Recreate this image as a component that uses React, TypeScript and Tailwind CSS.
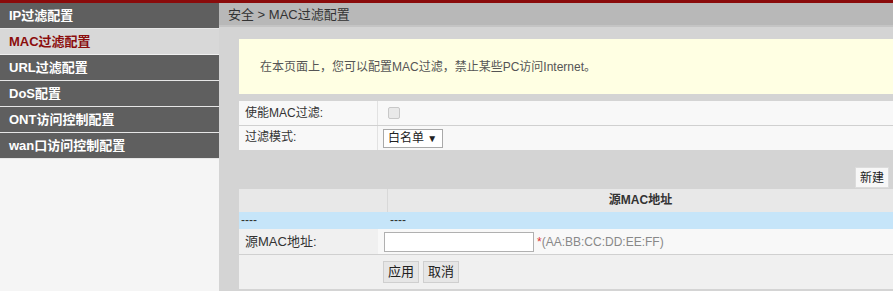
const menu = ["IP过滤配置", "MAC过滤配置", "URL过滤配置", "DoS配置", "ONT访问控制配置", "wan口访问控制配置"];

const font = { fontFamily: '"Liberation Sans", Arial, "Noto Sans CJK SC", sans-serif' };

export default function App() {
  return (
    <div className="w-[893px] h-[291px] overflow-hidden bg-[#d4d4d4] text-[12px] text-[#333]" style={font}>
      {/* top red strip */}
      <div className="h-[3px] bg-[#8a0b0b]" />
      <div className="flex h-[288px]">
        {/* sidebar */}
        <div className="w-[219px] shrink-0 bg-[#f5f5f5]">
          {menu.map((m, i) => (
            <div
              key={m}
              className={
                i === 1
                  ? "h-[26px] border-b border-[#f0f0f0] bg-[#d8d8d8] pl-[9px] leading-[25px] text-[13px] font-bold text-[#8b0d0d]"
                  : "h-[26px] border-b border-[#e6e6e6] bg-[#5f5f5f] pl-[9px] leading-[25px] text-[13px] font-bold text-white"
              }
            >
              {m}
            </div>
          ))}
        </div>

        {/* main */}
        <div className="flex-1 min-w-0">
          <div className="h-[24px] bg-[#b8b8b8] pl-[9px] leading-[24px] text-[13px] text-[#333] border-b-[2px] border-[#c4c4c4]">
            安全 &gt; MAC过滤配置
          </div>
          <div className="pl-[20px] pt-[12px]">
            <div className="h-[55px] bg-[#ffffe3] pl-[21px] flex items-center text-[#555]">
              在本页面上，您可以配置MAC过滤，禁止某些PC访问Internet。
            </div>

            <div className="mt-[7px] bg-[#f8f8f8]">
              <div className="flex h-[25px] border-b border-[#d0d0d0]">
                <div className="w-[139px] border-r border-[#e2e2e2] pl-[6px] leading-[24px]">使能MAC过滤:</div>
                <div className="flex items-center pl-[10px]">
                  <span className="w-[12px] h-[12px] rounded-[2px] border border-[#c8c8c8] bg-[#e9e9e9]" />
                </div>
              </div>
              <div className="flex h-[24px]">
                <div className="w-[139px] border-r border-[#e2e2e2] pl-[6px] leading-[23px]">过滤模式:</div>
                <div className="flex items-center pl-[5px]">
                  <span className="h-[19px] w-[60px] border border-[#a9a9a9] bg-white pl-[4px] text-[12px] leading-[17px] text-[#222]">
                    白名单 <span className="text-[10px]">▼</span>
                  </span>
                </div>
              </div>
            </div>

            <div className="h-[39px] flex items-end justify-end pr-[4px] pb-[1px]">
              <button className="h-[21px] px-[4px] bg-[#f7f7f7] border border-[#dcdcdc] text-[12px] text-[#222]">新建</button>
            </div>

            <div className="flex h-[23px] bg-[#e8e8e8]">
              <div className="w-[149px] border-r border-[#d8d8d8]" />
              <div className="flex-1 text-center font-bold leading-[23px]">源MAC地址</div>
            </div>
            <div className="flex h-[17px] bg-[#c6e5f9] leading-[17px]">
              <div className="w-[149px] pl-[2px]">----</div>
              <div className="pl-[2px]">----</div>
            </div>
            <div className="flex h-[26px] bg-[#f8f8f8] border-b border-[#d0d0d0]">
              <div className="w-[139px] bg-[#f0f0f0] pl-[6px] leading-[25px] text-[13px]">源MAC地址:</div>
              <div className="flex items-center pl-[6px]">
                <span className="h-[20px] w-[150px] border border-[#b0b0b0] bg-white" />
                <span className="ml-[3px] text-[#888]"><span className="text-[#d33]">*</span>(AA:BB:CC:DD:EE:FF)</span>
              </div>
            </div>
            <div className="flex h-[34px] bg-[#f0f0f0] items-center pl-[144px] gap-[4px]">
              <button className="h-[22px] px-[4px] bg-[#e6e6e6] border border-[#cfcfcf] text-[13px] text-[#222]">应用</button>
              <button className="h-[22px] px-[4px] bg-[#e6e6e6] border border-[#cfcfcf] text-[13px] text-[#222]">取消</button>
            </div>
          </div>
        </div>
      </div>
    </div>
  );
}
